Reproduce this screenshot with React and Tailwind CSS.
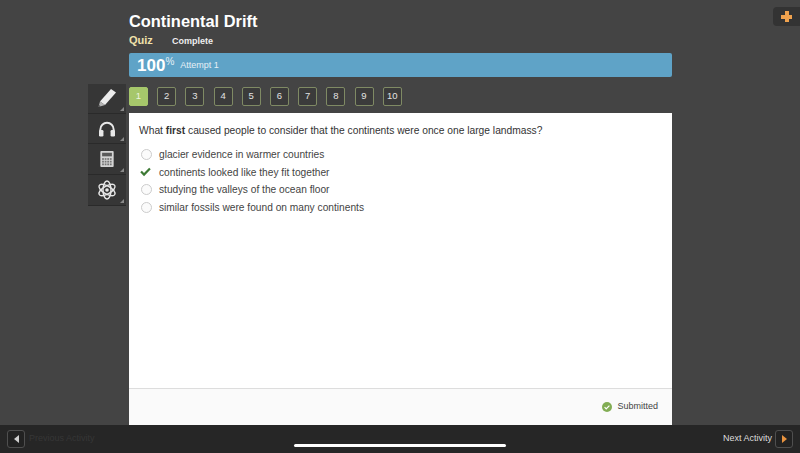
const PAGES = [1, 2, 3, 4, 5, 6, 7, 8, 9, 10];

const ANSWERS = [
  { text: 'glacier evidence in warmer countries' },
  { text: 'continents looked like they fit together', correct: true },
  { text: 'studying the valleys of the ocean floor' },
  { text: 'similar fossils were found on many continents' },
];

function Pencil() {
  return (
    <svg width="20" height="20" viewBox="0 0 20 20" className="-mt-[2px]">
      <path d="M14 1 L19 4.5 L8 17 L3 13.5 Z" fill="#ececec" />
      <path d="M3 13.5 L8 17 L1.5 19 Z" fill="#b5b5b5" />
      <path d="M1.9 17 L3.8 18.3 L1.5 19 Z" fill="#444" />
    </svg>
  );
}

function Headphones() {
  return (
    <svg width="18" height="16" viewBox="0 0 20 18">
      <path d="M2.5 13 V9.5 a7.5 7.5 0 0 1 15 0 V13" fill="none" stroke="#e8e8e8" strokeWidth="2.2" />
      <rect x="1" y="10" width="5" height="7.5" rx="1.5" fill="#e8e8e8" />
      <rect x="14" y="10" width="5" height="7.5" rx="1.5" fill="#e8e8e8" />
    </svg>
  );
}

function Calculator() {
  return (
    <svg width="14" height="16" viewBox="0 0 15 18">
      <rect width="15" height="18" rx="1" fill="#d4d4d4" />
      <rect x="2" y="2" width="11" height="4" fill="#5a5a5a" />
      {[0, 1, 2].map((row) =>
        [0, 1, 2, 3].map((col) => (
          <rect key={`${row}-${col}`} x={2 + col * 2.9} y={8 + row * 3} width="2" height="2" fill="#777" />
        )),
      )}
    </svg>
  );
}

function Atom() {
  return (
    <svg width="20" height="20" viewBox="0 0 20 20" fill="none" stroke="#e8e8e8" strokeWidth="1.4">
      <ellipse cx="10" cy="10" rx="9" ry="4" transform="rotate(30 10 10)" />
      <ellipse cx="10" cy="10" rx="9" ry="4" transform="rotate(90 10 10)" />
      <ellipse cx="10" cy="10" rx="9" ry="4" transform="rotate(150 10 10)" />
      <circle cx="10" cy="10" r="1.8" fill="#e8e8e8" stroke="none" />
    </svg>
  );
}

function Tick({ className }) {
  return (
    <svg viewBox="0 0 12 10" className={className}>
      <path d="M0.3 5.2 L2 3.6 L4.4 6 L10 0.3 L11.7 2 L4.4 9.6 Z" fill="currentColor" />
    </svg>
  );
}

const TOOLS = [
  { key: 'pencil', icon: Pencil, height: 'h-[30px]' },
  { key: 'audio', icon: Headphones, height: 'h-[30px]' },
  { key: 'calc', icon: Calculator, height: 'h-[31px]' },
  { key: 'atom', icon: Atom, height: 'h-[31px]' },
];

export default function App() {
  return (
    <div className="relative flex h-[453px] w-[800px] flex-col overflow-hidden bg-[#444444] font-['Liberation_Sans',Arial,sans-serif]">
      <div className="absolute right-0 top-[7px] flex h-[19px] w-[27px] items-center justify-center rounded-l-[4px] bg-[#333333]">
        <span className="relative block h-[11px] w-[11px]">
          <span className="absolute left-[3.5px] top-0 h-[11px] w-[4px] bg-[#f0a24e]" />
          <span className="absolute left-0 top-[3.5px] h-[4px] w-[11px] bg-[#f0a24e]" />
        </span>
      </div>

      <div className="flex h-[425px] flex-col pl-[129px]">
        <h1 className="mt-[11px] text-[16.4px] font-bold leading-[21px] text-white">Continental Drift</h1>
        <div className="flex h-[16px] items-center">
          <span className="w-[43px] text-[11px] font-bold text-[#f1e2ab]">Quiz</span>
          <span className="mt-[3px] text-[9px] font-bold text-[#eeeeee]">Complete</span>
        </div>
        <div className="mt-[5px] flex h-[24px] w-[543px] items-center rounded-[2px] bg-[#5fa3c7] pl-[8px]">
          <span className="text-[17px] font-bold leading-none text-white">100</span>
          <span className="mb-[6px] text-[10px] leading-none text-[#e6f0f6]">%</span>
          <span className="ml-[6px] mt-[1px] text-[9px] text-[#e6f0f6]">Attempt 1</span>
        </div>

        <div className="relative mt-[7px] flex h-[29px] items-start gap-[9.2px] pt-[3px]">
          <div className="absolute left-[-41px] top-0 flex w-[38px] flex-col">
            {TOOLS.map(({ key, icon: Icon, height }) => (
              <div key={key} className={`relative flex items-center justify-center border-b border-[#2a2a2a] bg-[#363636] ${height}`}>
                <Icon />
                <span className="absolute bottom-[2px] right-[2px] h-0 w-0 border-b-[4px] border-l-[4px] border-b-[#8a8a8a] border-l-transparent" />
              </div>
            ))}
          </div>
          {PAGES.map((page) => (
            <div
              key={page}
              className={`flex h-[19px] w-[19px] items-center justify-center rounded-[2px] border text-[9.5px] ${
                page === 1
                  ? 'border-[#a6c76b] bg-[#a6c76b] text-[#eef4df]'
                  : 'border-[#7f8a64] bg-[#3b3b3b] text-[#e2e2e2]'
              }`}
            >
              {page}
            </div>
          ))}
        </div>

        <div className="flex w-[543px] flex-1 flex-col bg-white">
          <p className="ml-[10px] mt-[11px] text-[10.25px] leading-[14px] text-[#333333]">
            What <b>first</b> caused people to consider that the continents were once one large landmass?
          </p>
          <ul className="ml-[12px] mt-[8px] flex flex-col">
            {ANSWERS.map((answer) => (
              <li key={answer.text} className="flex h-[17.6px] items-center">
                <span className="flex w-[18px] justify-start">
                  {answer.correct ? (
                    <Tick className="-ml-[1px] h-[10px] w-[11px] text-[#3d7a35]" />
                  ) : (
                    <span className="h-[11px] w-[11px] rounded-full border border-[#cccccc] bg-[#fbfbfb]" />
                  )}
                </span>
                <span className="text-[10.2px] text-[#444444]">{answer.text}</span>
              </li>
            ))}
          </ul>
          <div className="mt-auto flex h-[37px] items-center justify-end gap-[5px] border-t border-[#dddddd] bg-[#fafafa] pr-[14px]">
            <span className="flex h-[10px] w-[10px] items-center justify-center rounded-full bg-[#82ad54]">
              <Tick className="h-[5px] w-[6px] text-white" />
            </span>
            <span className="text-[9px] text-[#444444]">Submitted</span>
          </div>
        </div>
      </div>

      <div className="relative flex flex-1 items-center justify-between bg-[#262626] px-[7px]">
        <div className="flex items-center gap-[4px]">
          <div className="flex h-[18px] w-[18px] items-center justify-center rounded-[3px] border border-[#4f4f4f] bg-[#222222]">
            <span className="h-0 w-0 border-y-[4px] border-r-[5px] border-y-transparent border-r-[#cfcfcf]" />
          </div>
          <span className="text-[9px] text-[#363636]">Previous Activity</span>
        </div>
        <div className="flex items-center gap-[3px]">
          <span className="text-[9px] text-[#dddddd]">Next Activity</span>
          <div className="flex h-[18px] w-[18px] items-center justify-center rounded-[3px] border border-[#4f4f4f] bg-[#222222]">
            <span className="h-0 w-0 border-y-[4px] border-l-[5px] border-y-transparent border-l-[#e8933f]" />
          </div>
        </div>
        <span className="absolute bottom-[6px] left-[294px] h-[3px] w-[212px] rounded-full bg-white" />
      </div>
    </div>
  );
}
